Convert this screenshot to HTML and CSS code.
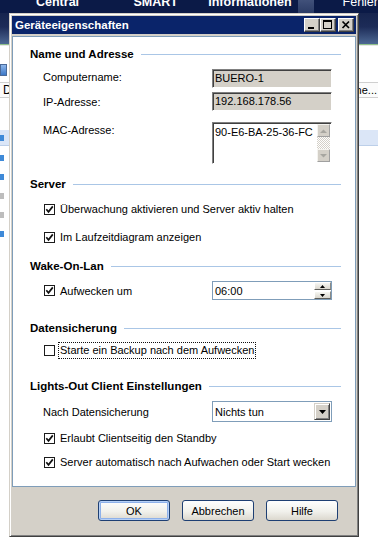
FILE: index.html
```html
<!DOCTYPE html>
<html lang="de">
<head>
<meta charset="utf-8">
<title>Geräteeigenschaften</title>
<link rel="stylesheet" href="styles.css">
</head>
<body>
<div class="desktop">
  <div class="topnav">
    <span class="nav-item nav-central">Central</span>
    <span class="nav-item nav-smart">SMART</span>
    <span class="nav-item nav-info">Informationen</span>
    <span class="nav-sep"></span>
    <span class="nav-item nav-plain">Fehler</span>
  </div>
  <div class="band"></div>
  <div class="workspace">
    <div class="ws-head"><span class="mon-icon"></span></div>
    <div class="toolbar"><span class="tb-left">D</span><span class="tb-search">Suche...</span></div>
    <div class="ws-gap"></div>
    <div class="listhead"><span class="sq sq-blue"></span></div>
    <div class="tree">
      <div class="tree-row"><span class="sq sq-blue"></span></div>
      <div class="tree-row"><span class="sq sq-blue"></span></div>
      <div class="tree-row"><span class="sq sq-gray"></span></div>
      <div class="tree-row"><span class="sq sq-gray"></span></div>
      <div class="tree-row"><span class="sq sq-blue"></span></div>
    </div>
  </div>
</div>

<div class="dialog">
  <div class="titlebar">
    <span class="title">Geräteeigenschaften</span>
    <div class="title-btns">
      <span class="tbtn"><svg width="14" height="12" viewBox="0 0 14 12"><rect x="3" y="8" width="6" height="2" fill="#000"/></svg></span>
      <span class="tbtn"><svg width="14" height="12" viewBox="0 0 14 12"><rect x="2.5" y="1.5" width="8" height="8" fill="none" stroke="#000"/><rect x="2" y="1" width="9" height="2" fill="#000"/></svg></span>
      <span class="tbtn tbtn-close"><svg width="14" height="12" viewBox="0 0 14 12"><path d="M3.5 2.5l6.5 6.5M10 2.5l-6.5 6.5" stroke="#000" stroke-width="1.7" fill="none"/></svg></span>
    </div>
  </div>

  <div class="panel">
    <div class="group-head"><span>Name und Adresse</span><i class="rule"></i></div>
    <div class="row">
      <span class="label">Computername:</span>
      <div class="field field-ro">BUERO-1</div>
    </div>
    <div class="row">
      <span class="label label-low">IP-Adresse:</span>
      <div class="field field-ro">192.168.178.56</div>
    </div>
    <div class="row">
      <span class="label">MAC-Adresse:</span>
      <div class="field field-area">
        <span class="area-text">90-E6-BA-25-36-FC</span>
        <div class="scrollbar">
          <span class="sb-btn"><svg width="7" height="4" viewBox="0 0 7 4"><path d="M0 4h7L3.5 0.5z" fill="#a7a6a0"/></svg></span>
          <span class="sb-track"></span>
          <span class="sb-btn"><svg width="7" height="4" viewBox="0 0 7 4"><path d="M0 0h7L3.5 3.5z" fill="#a7a6a0"/></svg></span>
        </div>
      </div>
    </div>

    <div class="group-head"><span>Server</span><i class="rule"></i></div>
    <div class="check"><span class="cb"><svg width="9" height="9" viewBox="0 0 9 9"><path d="M1.3 4.2l2.2 2.6L7.8 1.4" stroke="#111" stroke-width="1.7" fill="none"/></svg></span><span>Überwachung aktivieren und Server aktiv halten</span></div>
    <div class="check"><span class="cb"><svg width="9" height="9" viewBox="0 0 9 9"><path d="M1.3 4.2l2.2 2.6L7.8 1.4" stroke="#111" stroke-width="1.7" fill="none"/></svg></span><span>Im Laufzeitdiagram anzeigen</span></div>

    <div class="group-head"><span>Wake-On-Lan</span><i class="rule"></i></div>
    <div class="check-row">
      <div class="check check-inline"><span class="cb"><svg width="9" height="9" viewBox="0 0 9 9"><path d="M1.3 4.2l2.2 2.6L7.8 1.4" stroke="#111" stroke-width="1.7" fill="none"/></svg></span><span>Aufwecken um</span></div>
      <div class="field field-spin">
        <span class="value">06:00</span>
        <div class="spin">
          <span class="spin-btn"><svg width="5" height="3" viewBox="0 0 5 3"><path d="M0 3h5L2.5 0z" fill="#000"/></svg></span>
          <span class="spin-btn"><svg width="5" height="3" viewBox="0 0 5 3"><path d="M0 0h5L2.5 3z" fill="#000"/></svg></span>
        </div>
      </div>
    </div>

    <div class="group-head"><span>Datensicherung</span><i class="rule"></i></div>
    <div class="check"><span class="cb"></span><span class="focus-label">Starte ein Backup nach dem Aufwecken</span></div>

    <div class="group-head"><span>Lights-Out Client Einstellungen</span><i class="rule"></i></div>
    <div class="row row-center">
      <span class="label">Nach Datensicherung</span>
      <div class="field field-select">
        <span class="value">Nichts tun</span>
        <span class="drop-btn"><svg width="7" height="4" viewBox="0 0 7 4"><path d="M0 0h7L3.5 4z" fill="#000"/></svg></span>
      </div>
    </div>
    <div class="check"><span class="cb"><svg width="9" height="9" viewBox="0 0 9 9"><path d="M1.3 4.2l2.2 2.6L7.8 1.4" stroke="#111" stroke-width="1.7" fill="none"/></svg></span><span>Erlaubt Clientseitig den Standby</span></div>
    <div class="check"><span class="cb"><svg width="9" height="9" viewBox="0 0 9 9"><path d="M1.3 4.2l2.2 2.6L7.8 1.4" stroke="#111" stroke-width="1.7" fill="none"/></svg></span><span>Server automatisch nach Aufwachen oder Start wecken</span></div>
  </div>

  <div class="actions">
    <button class="btn btn-default">OK</button>
    <button class="btn">Abbrechen</button>
    <button class="btn">Hilfe</button>
  </div>
</div>
</body>
</html>
```

FILE: styles.css
```css
* {
  box-sizing: border-box;
}

html, body {
  margin: 0;
  padding: 0;
}

body {
  position: relative;
  width: 378px;
  height: 546px;
  overflow: hidden;
  background: #fff;
  font-family: "Liberation Sans", Arial, sans-serif;
  font-size: 11px;
  color: #000;
}

/* application behind the dialog */
.desktop {
  display: flex;
  flex-direction: column;
  height: 100%;
}

.topnav {
  display: flex;
  height: 13px;
  padding-left: 36px;
  overflow: hidden;
  background: #0b1a47;
  color: #fff;
  font-size: 12.5px;
  font-weight: bold;
}
.nav-item {
  line-height: 13px;
  margin-top: -4px;
  white-space: nowrap;
}
.nav-central { width: 99px; }
.nav-smart { width: 76px; }
.nav-info { width: 91px; }
.nav-sep {
  width: 16px;
  background: linear-gradient(#41517a, #2c3c66);
  margin-right: 29px;
}
.nav-plain { font-weight: normal; }

.band {
  height: 32px;
  background: linear-gradient(#16244e, #1d2c58 45%, #4d6893);
  border-bottom: 1px solid #8fc08a;
}

.workspace {
  flex: 1;
  display: flex;
  flex-direction: column;
}
.ws-head {
  height: 37px;
  padding-top: 18px;
  border-top: 1px solid #e6e6e6;
}
.mon-icon {
  display: block;
  width: 7px;
  height: 12px;
  background: linear-gradient(#8fb7ea, #3c78c8);
  border: 1px solid #4a6a9a;
}
.toolbar {
  display: flex;
  justify-content: space-between;
  align-items: center;
  height: 16px;
  background: #fbfbfb;
  border-top: 1px solid #cfcfcf;
  border-bottom: 1px solid #cfcfcf;
  padding: 0 1px 0 3px;
}
.tb-left {
  font-size: 12px;
}
.ws-gap {
  height: 32px;
}
.listhead {
  display: flex;
  align-items: center;
  height: 16px;
  background: #dbe6f7;
  border-bottom: 1px solid #bccfe9;
}
.tree {
  padding-top: 2px;
}
.tree-row {
  display: flex;
  align-items: center;
  height: 19px;
}
.sq {
  display: block;
  width: 4px;
  height: 6px;
}
.sq-blue { background: #3f8ad8; }
.sq-gray { background: #bdbdbd; }

/* dialog window */
.dialog {
  position: absolute;
  left: 9px;
  top: 13px;
  width: 350px;
  height: 524px;
  display: flex;
  flex-direction: column;
  padding: 2px;
  background: #d4d0c8;
  border: 1px solid;
  border-color: #d4d0c8 #404040 #404040 #d4d0c8;
  box-shadow: inset 1px 1px #fff, inset -1px -1px #808080;
}

.titlebar {
  display: flex;
  justify-content: space-between;
  align-items: center;
  height: 18px;
  padding: 0 2px 0 3px;
  background: #0a246a;
}
.title {
  color: #fff;
  font-weight: bold;
  font-size: 11.5px;
}
.title-btns {
  display: flex;
}
.tbtn {
  display: block;
  width: 16px;
  height: 14px;
  background: #d4d0c8;
  border: 1px solid;
  border-color: #fff #404040 #404040 #fff;
  box-shadow: inset -1px -1px #808080;
}
.tbtn svg {
  display: block;
}
.tbtn-close {
  margin-left: 2px;
}

.panel {
  display: grid;
  grid-template-rows: 22px 23px 30px 55px 24px 28px 30px 22px 40px 21px 37px 22px 29px 24px 16px;
  align-items: start;
  height: 451px;
  margin-top: 2px;
  padding: 10px 14px 0 17px;
  background: #fff;
  border: 1px solid #7f9db9;
}

.group-head {
  display: flex;
  align-items: center;
  gap: 7px;
  height: 14px;
  font-size: 11.5px;
  font-weight: bold;
}
.group-head .rule {
  flex: 1;
  height: 1px;
  background: #aac6e6;
}

.row {
  display: flex;
  align-items: flex-start;
  margin: 0 9px 0 13px;
}
.row-center {
  align-items: center;
}
.label {
  flex: 1;
  line-height: 14px;
  padding-top: 1px;
}
.label-low {
  padding-top: 3px;
}

.field {
  flex: none;
  width: 120px;
}
.field-ro {
  height: 19px;
  padding-left: 2px;
  line-height: 17px;
  background: #d4d0c8;
  border: 1px solid;
  border-color: #808080 #fff #fff #808080;
  box-shadow: inset 1px 1px #404040;
}
.field-area {
  display: flex;
  height: 42px;
  padding: 1px 1px 1px 2px;
  background: #fff;
  border: 1px solid;
  border-color: #808080 #fff #fff #808080;
  box-shadow: inset 1px 1px #404040;
}
.area-text {
  flex: 1;
  line-height: 14px;
  padding-top: 1px;
}
.scrollbar {
  display: flex;
  flex-direction: column;
  width: 13px;
}
.sb-btn {
  display: flex;
  align-items: center;
  justify-content: center;
  height: 13px;
  background: #d4d0c8;
  border: 1px solid;
  border-color: #f4f3ef #a0a0a0 #a0a0a0 #f4f3ef;
}
.sb-track {
  flex: 1;
  background: repeating-conic-gradient(#fff 0 25%, #d4d0c8 0 50%) 0 0 / 2px 2px;
}

.check {
  display: flex;
  align-items: center;
  gap: 5px;
  height: 16px;
  margin-left: 14px;
}
.cb {
  display: flex;
  align-items: center;
  justify-content: center;
  width: 11px;
  height: 11px;
  background: #fff;
  border: 1px solid #1c1c1c;
}
.cb svg {
  display: block;
}
.focus-label {
  margin-left: -2px;
  padding: 0 1px;
  line-height: 15px;
  border: 1px dotted #111;
}

.check-row {
  display: flex;
  align-items: center;
  margin: 0 9px 0 14px;
}
.check-inline {
  flex: 1;
  margin-left: 0;
}

.field-spin {
  display: flex;
  align-items: stretch;
  height: 19px;
  padding-left: 2px;
  background: #fff;
  border: 1px solid #7f9db9;
}
.value {
  flex: 1;
  align-self: center;
}
.spin {
  display: flex;
  flex-direction: column;
  gap: 1px;
  width: 17px;
}
.spin-btn {
  display: flex;
  align-items: center;
  justify-content: center;
  flex: 1;
  background: linear-gradient(#f7f7f3, #d9d6cd);
  border: 1px solid;
  border-color: #fff #8a8a86 #5e5e5a #fff;
}

.field-select {
  display: flex;
  align-items: center;
  height: 21px;
  padding: 0 1px 0 2px;
  background: #fff;
  border: 1px solid #7f9db9;
}
.drop-btn {
  display: flex;
  align-items: center;
  justify-content: center;
  width: 16px;
  height: 17px;
  background: #d4d0c8;
  border: 1px solid;
  border-color: #d4d0c8 #404040 #404040 #d4d0c8;
  box-shadow: inset 1px 1px #fff, inset -1px -1px #808080;
}

.actions {
  flex: 1;
  display: flex;
  justify-content: flex-end;
  align-items: flex-start;
  gap: 12px;
  padding: 13px 18px 0 0;
}
.btn {
  width: 72px;
  height: 21px;
  padding: 0;
  font-family: "Liberation Sans", Arial, sans-serif;
  font-size: 11px;
  color: #000;
  background: linear-gradient(#fefefe, #f1f1ec 55%, #dcd8ce);
  border: 1px solid #1e3f73;
  border-radius: 3px;
}
.btn-default {
  box-shadow: inset 0 0 0 1px #b6d0f6, inset 0 0 0 2px #8eb1ea;
}
```
